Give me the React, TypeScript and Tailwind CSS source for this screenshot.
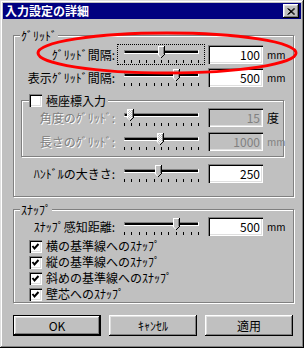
import { useId } from "react";

const FONT = "font-['Noto_Sans_CJK_JP',sans-serif]";
const SUNKEN =
  "shadow-[inset_1px_1px_#808080,inset_2px_2px_#000,inset_-1px_-1px_#fff,inset_-2px_-2px_#dfdfdf]";
const RAISED =
  "shadow-[inset_-1px_-1px_#000,inset_1px_1px_#fff,inset_-2px_-2px_#808080,inset_2px_2px_#dfdfdf]";

function Slider({
  value,
  focused = false,
  disabled = false,
}: {
  value: number;
  focused?: boolean;
  disabled?: boolean;
}) {
  const id = "d" + useId().replace(/[^a-zA-Z0-9]/g, "");
  const c = Math.round(6 + value * 74);
  const ticks = Array.from({ length: 11 }, (_, i) => 6 + Math.round(i * 7.4));
  return (
    <div
      className={
        focused
          ? "h-[21px] w-[88px] shrink-0 border border-dotted border-black"
          : "h-[21px] w-[88px] shrink-0 border border-[#c0c0c0]"
      }
    >
      <svg width="86" height="19" viewBox="0 0 86 19" shapeRendering="crispEdges">
        <defs>
          <pattern id={id} width="2" height="2" patternUnits="userSpaceOnUse">
            <rect width="2" height="2" fill="#c0c0c0" />
            <rect width="1" height="1" fill="#fff" />
            <rect x="1" y="1" width="1" height="1" fill="#fff" />
          </pattern>
        </defs>
        {/* channel */}
        <rect x="6" y="5" width="74" height="1" fill="#808080" />
        <rect x="6" y="5" width="1" height="4" fill="#808080" />
        <rect x="7" y="6" width="73" height="2" fill="#000" />
        <rect x="6" y="8" width="75" height="1" fill="#fff" />
        <rect x="80" y="5" width="1" height="4" fill="#fff" />
        {/* ticks */}
        {ticks.map((t) => (
          <rect key={t} x={t} y="15" width="1" height="3" fill="#000" />
        ))}
        {/* thumb */}
        <polygon
          points={`${c - 3},1 ${c + 3},1 ${c + 3},9 ${c},12 ${c - 3},9`}
          fill={disabled ? `url(#${id})` : "#c0c0c0"}
        />
        <rect x={c - 3} y="1" width="6" height="1" fill="#fff" />
        <rect x={c - 3} y="1" width="1" height="9" fill="#fff" />
        <rect x={c + 2} y="2" width="1" height="7" fill="#808080" />
        <rect x={c + 3} y="1" width="1" height="9" fill="#000" />
        <path d={`M${c - 3} 9.5 L${c} 12.5`} stroke="#fff" shapeRendering="auto" />
        <path d={`M${c + 3.5} 9.5 L${c} 13`} stroke="#000" shapeRendering="auto" />
      </svg>
    </div>
  );
}

function Field({ value, disabled = false }: { value: string; disabled?: boolean }) {
  return (
    <div
      className={`flex h-[19px] w-[55px] shrink-0 items-center justify-end pr-[3px] text-[12px] leading-none ${SUNKEN} ${
        disabled ? "bg-[#c0c0c0] text-[#808080]" : "bg-white text-black"
      }`}
    >
      {value}
    </div>
  );
}

function Check({ checked = false }: { checked?: boolean }) {
  return (
    <span className={`inline-flex h-[13px] w-[13px] shrink-0 items-center justify-center bg-white ${SUNKEN}`}>
      {checked && (
        <svg width="9" height="9" viewBox="0 0 9 9">
          <polyline points="1.5,4 3.5,6.5 7.5,2" fill="none" stroke="#000" strokeWidth="2" />
        </svg>
      )}
    </span>
  );
}

function Row({
  label,
  labelW,
  slider,
  value,
  unit,
  focused,
  disabled,
  unitClass = "text-[10px] text-black",
  className = "",
}: {
  label: string;
  labelW: string;
  slider: number;
  value: string;
  unit?: string;
  focused?: boolean;
  disabled?: boolean;
  unitClass?: string;
  className?: string;
}) {
  return (
    <div className={`flex h-[21px] items-center ${className}`}>
      <div
        className={`${labelW} shrink-0 whitespace-nowrap pr-[2px] text-right text-[12px] leading-none ${
          disabled ? "text-[#808080] [text-shadow:1px_1px_0_#fff]" : "text-black"
        }`}
      >
        {label}
      </div>
      <Slider value={slider} focused={focused} disabled={disabled} />
      <div className="ml-[3px]">
        <Field value={value} disabled={disabled} />
      </div>
      {unit && <span className={`ml-[4px] leading-none ${unitClass}`}>{unit}</span>}
    </div>
  );
}

function Legend({ children }: { children: React.ReactNode }) {
  return (
    <span className="absolute -top-[7px] left-[6px] bg-[#c0c0c0] px-[1px] text-[12px] leading-[13px] text-black">
      {children}
    </span>
  );
}

function Button({ label, isDefault = false }: { label: string; isDefault?: boolean }) {
  return (
    <div
      className={`flex h-[21px] w-[88px] items-center justify-center text-[12px] leading-none text-black ${
        isDefault ? "border border-black" : ""
      } ${RAISED}`}
    >
      {label}
    </div>
  );
}

export default function App() {
  return (
    <div
      className={`relative h-[348px] w-[304px] overflow-hidden bg-[#c0c0c0] p-[3px] ${FONT} shadow-[inset_-1px_-1px_#000,inset_1px_1px_#dfdfdf,inset_-2px_-2px_#808080,inset_2px_2px_#fff]`}
    >
      {/* title bar */}
      <div className="flex h-[16px] items-center justify-between bg-[#000080] pl-[2px] pr-[2px]">
        <span className="text-[12px] font-bold leading-none text-white">入力設定の詳細</span>
        <div className={`flex h-[14px] w-[16px] items-center justify-center bg-[#c0c0c0] ${RAISED}`}>
          <svg width="8" height="7" viewBox="0 0 8 7">
            <path d="M0.5 0.5 L7 6.5 M1.5 0.5 L8 6.5 M7 0.5 L0.5 6.5 M8 0.5 L1.5 6.5" stroke="#000" strokeWidth="1" />
          </svg>
        </div>
      </div>

      {/* grid group */}
      <div className="relative ml-[10px] mt-[16px] h-[162px] w-[281px] border border-[#808080] shadow-[1px_1px_0_#fff,inset_1px_1px_0_#fff]">
        <Legend>ｸﾞﾘｯﾄﾞ</Legend>
        <Row
          className="mt-[8px]"
          label="ｸﾞﾘｯﾄﾞ間隔:"
          labelW="w-[103px]"
          slider={0.5}
          value="100"
          unit="mm"
          focused
        />
        <Row
          className="mt-[2px]"
          label="表示ｸﾞﾘｯﾄﾞ間隔:"
          labelW="w-[103px]"
          slider={0.7}
          value="500"
          unit="mm"
        />

        {/* polar */}
        <div className="relative ml-[7px] mt-[12px] h-[57px] w-[263px] border border-[#808080] shadow-[1px_1px_0_#fff,inset_1px_1px_0_#fff]">
          <span className="absolute -top-[7px] left-[7px] flex items-center gap-[4px] bg-[#c0c0c0] pr-[2px] text-[12px] leading-[13px] text-black">
            <Check />
            極座標入力
          </span>
          <Row
            className="mt-[6px]"
            label="角度のｸﾞﾘｯﾄﾞ:"
            labelW="w-[95px]"
            slider={0.08}
            value="15"
            unit="度"
            unitClass="text-[12px] text-black"
            disabled
          />
          <Row
            className="mt-[3px]"
            label="長さのｸﾞﾘｯﾄﾞ:"
            labelW="w-[95px]"
            slider={0.49}
            value="1000"
            unit="mm"
            unitClass="text-[10px] text-[#808080]"
            disabled
          />
        </div>

        <Row
          className="mt-[6px]"
          label="ﾊﾝﾄﾞﾙの大きさ:"
          labelW="w-[103px]"
          slider={0.46}
          value="250"
        />
      </div>

      {/* snap group */}
      <div className="relative ml-[10px] mt-[12px] h-[94px] w-[281px] border border-[#808080] shadow-[1px_1px_0_#fff,inset_1px_1px_0_#fff]">
        <Legend>ｽﾅｯﾌﾟ</Legend>
        <Row
          className="mt-[6px]"
          label="ｽﾅｯﾌﾟ感知距離:"
          labelW="w-[103px]"
          slider={0.7}
          value="500"
          unit="mm"
        />
        <div className="ml-[15px] mt-[1px] flex flex-col">
          {["横の基準線へのｽﾅｯﾌﾟ", "縦の基準線へのｽﾅｯﾌﾟ", "斜めの基準線へのｽﾅｯﾌﾟ", "壁芯へのｽﾅｯﾌﾟ"].map((t) => (
            <div key={t} className="flex h-[16px] items-center gap-[4px] text-[12px] leading-none text-black">
              <Check checked />
              {t}
            </div>
          ))}
        </div>
      </div>

      {/* buttons */}
      <div className="ml-[10px] mt-[12px] flex gap-[8px]">
        <Button label="OK" isDefault />
        <Button label="ｷｬﾝｾﾙ" />
        <Button label="適用" />
      </div>

      {/* red annotation */}
      <svg className="pointer-events-none absolute left-0 top-0" width="304" height="348" viewBox="0 0 304 348">
        <ellipse cx="167" cy="53" rx="129" ry="20" fill="none" stroke="#ff0000" strokeWidth="3" />
      </svg>
    </div>
  );
}
